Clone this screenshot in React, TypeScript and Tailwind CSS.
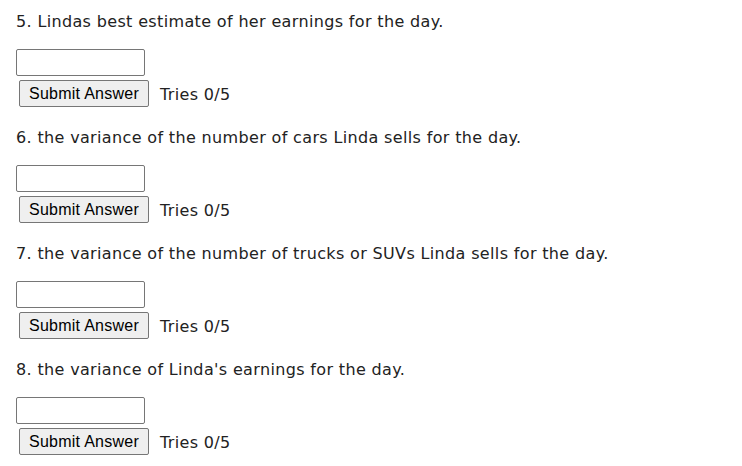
const QUESTIONS = [
  "5. Lindas best estimate of her earnings for the day.",
  "6. the variance of the number of cars Linda sells for the day.",
  "7. the variance of the number of trucks or SUVs Linda sells for the day.",
  "8. the variance of Linda's earnings for the day.",
];

function Question({ text }: { text: string }) {
  return (
    <div className="flex flex-col h-[116px]">
      <p className="h-[24px] leading-[24px] text-[16px] text-[#222] tracking-[0.35px]">{text}</p>
      <input
        type="text"
        className="mt-[15px] w-[129px] h-[27px] border border-[#767676] rounded-[2px] bg-white px-1 outline-none"
      />
      <div className="flex items-center mt-[4px] h-[27px]">
        <button
          type="button"
          className="ml-[3px] w-[130px] h-[27px] border border-[#767676] rounded-[2px] bg-[#efefef] text-[16px] tracking-[0.25px] text-black leading-none font-['Liberation_Sans',Arial,sans-serif]"
        >
          Submit Answer
        </button>
        <span className="ml-[11px] mt-[2px] text-[16px] text-[#222] tracking-[0.35px] leading-none">Tries 0/5</span>
      </div>
    </div>
  );
}

export default function App() {
  return (
    <div className="w-[742px] h-[466px] bg-white overflow-hidden pl-[16px] pt-[10px] font-['DejaVu_Sans',Verdana,sans-serif]">
      {QUESTIONS.map((q) => (
        <Question key={q} text={q} />
      ))}
    </div>
  );
}
